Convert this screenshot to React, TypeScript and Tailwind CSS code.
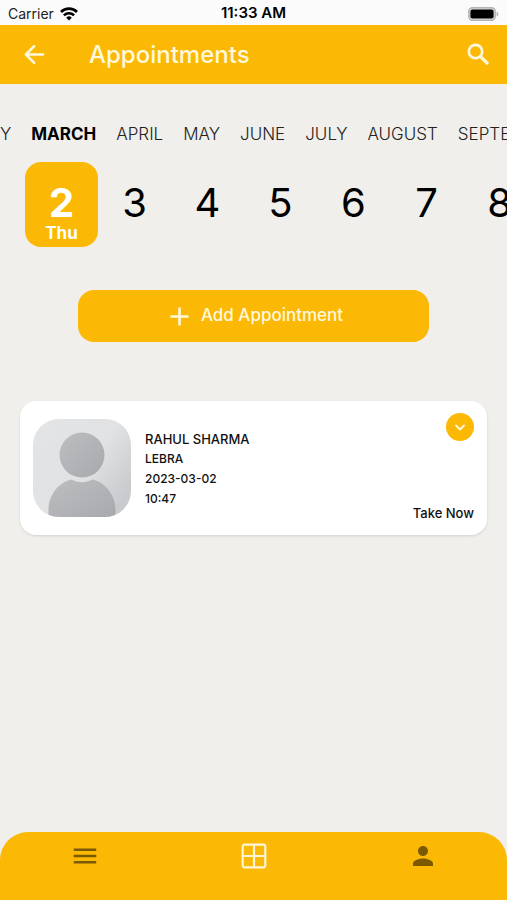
import { useLayoutEffect, useRef } from "react";
import clsx from "clsx";
import { MdAdd, MdMenu, MdPerson } from "react-icons/md";

const MONTHS = [
  "JANUARY",
  "FEBRUARY",
  "MARCH",
  "APRIL",
  "MAY",
  "JUNE",
  "JULY",
  "AUGUST",
  "SEPTEMBER",
  "OCTOBER",
  "NOVEMBER",
  "DECEMBER",
];

const DAYS = [2, 3, 4, 5, 6, 7, 8];

const ACTIVE_MONTH = "MARCH";
const ACTIVE_DAY = 2;

function WifiIcon() {
  return (
    <svg viewBox="0 0 18 14" className="h-3.5 w-[18px]" fill="none" stroke="#000">
      <path d="M1 5a11.400 11.400 0 0 1 16 0" strokeWidth="2.7" />
      <path d="M3.900 8.300a7.200 7.200 0 0 1 10.200 0" strokeWidth="2.5" />
      <path d="M9 13.600 6.200 10.700a4 4 0 0 1 5.600 0Z" fill="#000" stroke="none" />
    </svg>
  );
}

function BatteryIcon() {
  return (
    <svg viewBox="0 0 31 14" className="h-3.5 w-[31px]">
      <rect x="0.8" y="0.8" width="26.4" height="12.4" rx="3.6" fill="#ddd" stroke="#b4b4b4" strokeWidth="1.5" />
      <rect x="2.4" y="2.4" width="23.2" height="9.2" rx="2" fill="#000" />
      <path d="M28.6 4.400c1.200.4 1.900 1.400 1.900 2.600s-.7 2.200-1.900 2.600Z" fill="#b4b4b4" />
    </svg>
  );
}

function BackIcon() {
  return (
    <svg
      viewBox="0 0 29 29"
      className="size-[29px]"
      fill="none"
      stroke="currentColor"
      strokeWidth="2.6"
      strokeLinecap="round"
      strokeLinejoin="round"
    >
      <path d="M23 14.500H6.500M14.200 6.200l-8.300 8.300 8.300 8.300" />
    </svg>
  );
}

function SearchIcon() {
  return (
    <svg viewBox="0 0 29 29" className="size-[29px]" fill="none" stroke="currentColor">
      <circle cx="11.500" cy="11.500" r="6.700" strokeWidth="2.700" />
      <path d="m16.800 16.800 7.200 7.200" strokeWidth="3.200" />
    </svg>
  );
}

function ChevronIcon() {
  return (
    <svg
      viewBox="0 0 18 18"
      className="size-[18px]"
      fill="none"
      stroke="currentColor"
      strokeWidth="1.9"
      strokeLinecap="round"
      strokeLinejoin="round"
    >
      <path d="m5 7.500 4 4 4-4" />
    </svg>
  );
}

function WindowIcon() {
  return (
    <svg viewBox="0 0 26 26" className="size-[26px]" fill="none" stroke="currentColor" strokeWidth="2.2">
      <rect x="1.7" y="1.7" width="22.6" height="22.6" rx="2" />
      <path d="M13 2v22M2 13h22" />
    </svg>
  );
}

function Avatar() {
  return (
    <svg viewBox="0 0 98 98" className="size-[98px] shrink-0 rounded-[26px]">
      <defs>
        <linearGradient id="avatar-bg" x1="0" y1="0" x2="1" y2="0.7">
          <stop offset="0" stopColor="#e3e4e6" />
          <stop offset="0.6" stopColor="#e1e2e4" />
          <stop offset="1" stopColor="#c9cacd" />
        </linearGradient>
        <linearGradient id="avatar-fg" x1="0" y1="0" x2="1" y2="1">
          <stop offset="0" stopColor="#bdbec0" />
          <stop offset="1" stopColor="#a8a9ad" />
        </linearGradient>
      </defs>
      <rect width="98" height="98" fill="url(#avatar-bg)" />
      <circle cx="49" cy="36" r="22.5" fill="url(#avatar-fg)" />
      <path
        d="M15.500 98V91C15.500 76 26 63 38.500 60.500c6.500 3.500 14.500 3.500 21 0C72 63 82.500 76 82.500 91v7Z"
        fill="url(#avatar-fg)"
      />
    </svg>
  );
}

function StatusBar() {
  return (
    <div className="grid h-[25px] grid-cols-3 items-center bg-[#fbfbfb] px-2 pt-0.5 text-black">
      <div className="flex items-center gap-1.5 text-sm text-[#222]">
        <span>Carrier</span>
        <WifiIcon />
      </div>
      <span className="text-center text-[15px] font-semibold">11:33 AM</span>
      <div className="flex justify-end">
        <BatteryIcon />
      </div>
    </div>
  );
}

function MonthStrip() {
  const stripRef = useRef<HTMLDivElement>(null);
  const activeRef = useRef<HTMLButtonElement>(null);

  // start with the current month at the left edge
  useLayoutEffect(() => {
    if (stripRef.current && activeRef.current) {
      stripRef.current.scrollLeft = activeRef.current.offsetLeft - 31;
    }
  }, []);

  return (
    <div ref={stripRef} className="relative flex gap-5 overflow-x-auto px-6 [scrollbar-width:none]">
      {MONTHS.map((month) => {
        const active = month === ACTIVE_MONTH;
        return (
          <button
            key={month}
            ref={active ? activeRef : undefined}
            type="button"
            className={clsx(
              "shrink-0 text-[17px] leading-6",
              active ? "font-bold text-black" : "font-light text-[#222]",
            )}
          >
            {month}
          </button>
        );
      })}
    </div>
  );
}

function DayStrip() {
  return (
    <div className="mt-4 flex overflow-x-auto pl-[25px] [scrollbar-width:none]">
      {DAYS.map((day) => {
        const active = day === ACTIVE_DAY;
        return (
          <button
            key={day}
            type="button"
            className={clsx(
              "flex h-[85px] w-[73px] shrink-0 flex-col items-center rounded-2xl pt-[21px] text-[40px] leading-10",
              active ? "bg-[#fbb906] font-bold text-white" : "text-black",
            )}
          >
            {day}
            {active && <span className="text-[17px] leading-5">Thu</span>}
          </button>
        );
      })}
    </div>
  );
}

function AppointmentCard() {
  return (
    <article className="mx-5 mt-[59px] flex rounded-2xl bg-white py-[18px] pr-[13px] pl-[13px] shadow-sm">
      <Avatar />
      <div className="ml-3.5 flex-1 pt-2.5 text-xs leading-5 font-medium text-[#111]">
        <h2 className="text-[13px] leading-5">RAHUL SHARMA</h2>
        <p>LEBRA</p>
        <p>2023-03-02</p>
        <p>10:47</p>
      </div>
      <div className="-my-1.5 flex flex-col items-end justify-between">
        <button
          type="button"
          aria-label="Show details"
          className="flex size-7 items-center justify-center rounded-full bg-[#fbb906] text-[#fff8dc]"
        >
          <ChevronIcon />
        </button>
        <button type="button" className="text-[13px] leading-5 font-medium text-[#111]">
          Take Now
        </button>
      </div>
    </article>
  );
}

function BottomNav() {
  return (
    <nav className="grid h-[68px] grid-cols-3 items-start justify-items-center rounded-t-[28px] bg-[#fbb906] pt-2.5 text-[#7a5900]">
      <button type="button" aria-label="Menu" className="flex h-7 items-center">
        <MdMenu className="size-[30px]" />
      </button>
      <button type="button" aria-label="Dashboard" className="flex h-7 items-center text-[#fff6d8]">
        <WindowIcon />
      </button>
      <button type="button" aria-label="Profile" className="flex h-7 items-center">
        <MdPerson className="size-[30px]" />
      </button>
    </nav>
  );
}

export default function App() {
  return (
    <div className="flex min-h-screen flex-col bg-[#f0efeb] font-[Inter,sans-serif]">
      <StatusBar />
      <header className="flex h-[59px] items-center bg-[#fbb906] pr-3.5 pl-5 text-[#fff8dc]">
        <button type="button" aria-label="Back">
          <BackIcon />
        </button>
        <h1 className="ml-10 flex-1 text-2xl font-medium">Appointments</h1>
        <button type="button" aria-label="Search">
          <SearchIcon />
        </button>
      </header>

      <main className="flex-1 pt-[38px]">
        <MonthStrip />
        <DayStrip />
        <div className="mt-[43px] px-[78px]">
          <button
            type="button"
            className="flex h-[52px] w-full items-center justify-center gap-1.5 rounded-2xl bg-[#fbb906] text-[17px] font-medium text-[#fff8dc]"
          >
            <MdAdd className="size-[31px]" />
            Add Appointment
          </button>
        </div>
        <AppointmentCard />
      </main>

      <BottomNav />
    </div>
  );
}
